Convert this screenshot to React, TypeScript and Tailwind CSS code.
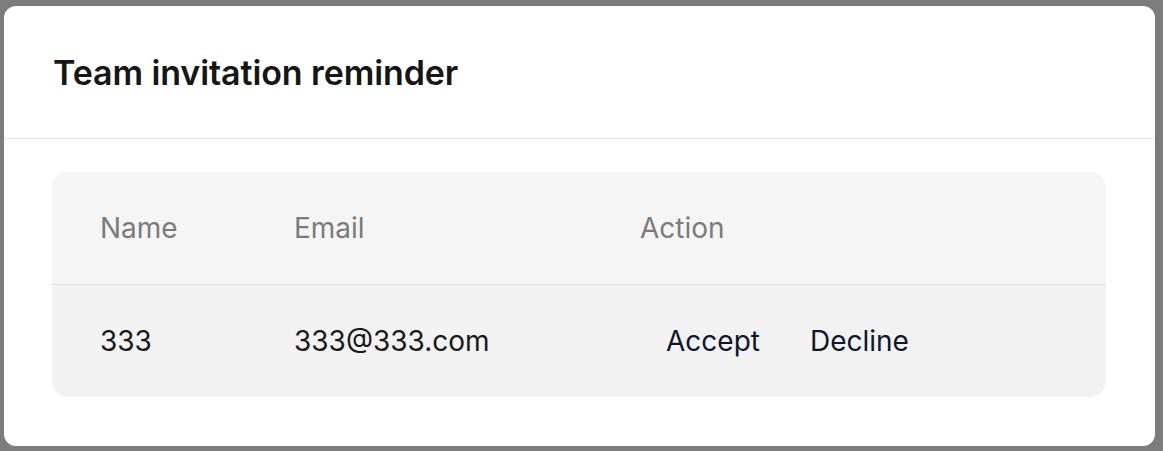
import { useState } from "react";

// Undangan tim yang masih menunggu jawaban — satu baris per undangan.
const invites = [{ id: 1, name: "333", email: "333@333.com" }];

export default function App() {
  const [answered, setAnswered] = useState<Record<number, string>>({});

  return (
    <div
      className="h-[451px] w-[1163px] overflow-hidden bg-[#7c7c7c] pl-[4px] pt-[6px]"
      style={{ fontFamily: "Inter, 'Noto Sans', sans-serif" }}
    >
      <div className="flex h-[440px] w-[1151px] flex-col rounded-[12px] bg-white">
        <div className="flex h-[133px] items-center border-b border-[#e8e8e8] px-[49px]">
          <h1 className="text-[34px] font-semibold tracking-[-0.1px] text-[#161616]">
            Team invitation reminder
          </h1>
        </div>

        <div className="pl-[48px] pr-[49px] pt-[33px]">
          <div className="overflow-hidden rounded-[16px] bg-[#f2f2f2]">
            <div className="flex h-[113px] items-center border-b border-[#e0e0e0] bg-[#f5f5f5] pl-[48px] text-[28px] text-[#7b7b7b]">
              <div className="w-[194px]">Name</div>
              <div className="w-[346px]">Email</div>
              <div>Action</div>
            </div>

            {invites.map((inv) => (
              <div
                key={inv.id}
                className="flex h-[112px] items-center pl-[48px] text-[28px] text-[#1a1a1a]"
              >
                <div className="w-[194px]">{inv.name}</div>
                <div className="w-[346px]">{inv.email}</div>
                <div className="flex items-center">
                  {answered[inv.id] ? (
                    <span className="px-[26px] text-[#7b7b7b]">{answered[inv.id]}</span>
                  ) : (
                    <>
                      <button
                        className="rounded-[10px] py-[8px] pl-[26px] pr-[25px] text-[#0f172a]"
                        onClick={() => setAnswered({ ...answered, [inv.id]: "Accepted" })}
                      >
                        Accept
                      </button>
                      <button
                        className="rounded-[10px] px-[25px] py-[8px] text-[#0f172a]"
                        onClick={() => setAnswered({ ...answered, [inv.id]: "Declined" })}
                      >
                        Decline
                      </button>
                    </>
                  )}
                </div>
              </div>
            ))}
          </div>
        </div>
      </div>
    </div>
  );
}
